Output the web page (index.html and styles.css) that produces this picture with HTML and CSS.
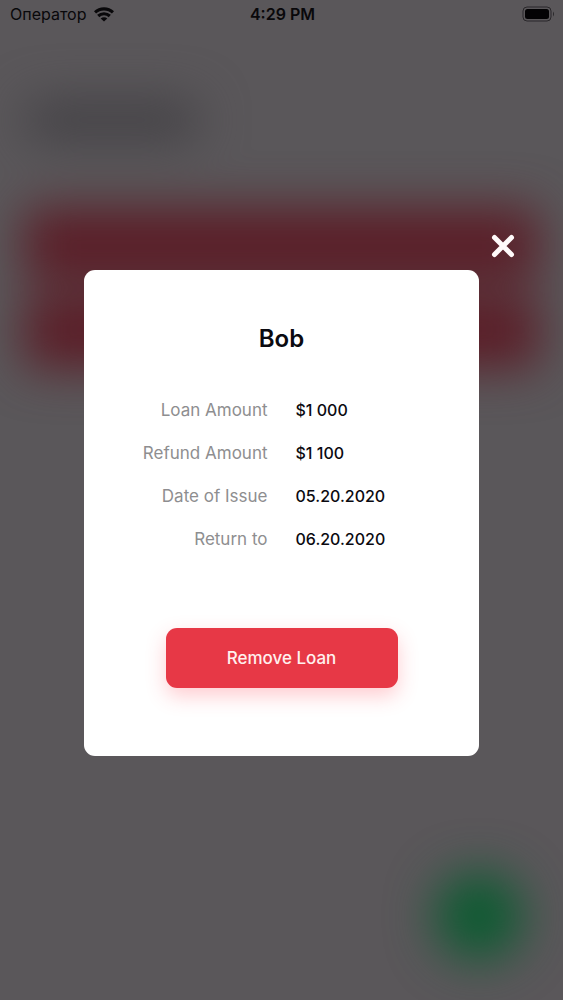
FILE: index.html
```html
<!DOCTYPE html>
<html lang="en">
<head>
<meta charset="utf-8">
<meta name="viewport" content="width=device-width, initial-scale=1">
<title>Loan details</title>
<link rel="stylesheet" href="styles.css">
</head>
<body>
<div class="screen">
  <div class="backdrop" aria-hidden="true">
    <div class="backdrop-title"></div>
    <div class="backdrop-list">
      <div class="backdrop-row"></div>
      <div class="backdrop-row"></div>
    </div>
    <div class="backdrop-add"></div>
  </div>
  <div class="overlay">
    <header class="status">
      <div class="carrier">
        <span>Оператор</span>
        <svg class="wifi" viewBox="0 0 20 15" aria-hidden="true">
          <g fill="none" stroke="#09080a" stroke-width="3.2">
            <path d="M1 5.4C6 .7 14 .7 19 5.4"/>
            <path d="M4.2 9C7.5 6 12.5 6 15.8 9"/>
          </g>
          <path fill="#09080a" d="M10 14.6 6.7 11.4C8.5 9.8 11.5 9.8 13.3 11.4Z"/>
        </svg>
      </div>
      <time class="clock">4:29 PM</time>
      <svg class="battery" viewBox="0 0 33 16" aria-hidden="true">
        <rect x="1" y="1" width="28" height="14" rx="4" fill="none" stroke="#29272a" stroke-width="1"/>
        <rect x="3" y="3" width="24" height="10" rx="2.5" fill="#030204"/>
        <path d="M31 5.500q2 2.500 0 5z" fill="#29272a"/>
      </svg>
    </header>
    <main class="stage">
      <button class="close" type="button" aria-label="Close">
        <svg viewBox="0 0 24 24" aria-hidden="true"><path d="M3.500 3.500 20.500 20.500M20.500 3.500 3.500 20.500" stroke="#fffafa" stroke-width="5" stroke-linecap="round"/></svg>
      </button>
      <section class="card" role="dialog" aria-labelledby="name">
        <h1 class="name" id="name">Bob</h1>
        <dl class="details">
          <dt>Loan Amount</dt><dd>$1 000</dd>
          <dt>Refund Amount</dt><dd>$1 100</dd>
          <dt>Date of Issue</dt><dd>05.20.2020</dd>
          <dt>Return to</dt><dd>06.20.2020</dd>
        </dl>
        <button class="remove" type="button">Remove Loan</button>
      </section>
    </main>
  </div>
</div>
</body>
</html>
```
FILE: styles.css
```css
* { box-sizing: border-box; }

body {
  margin: 0;
  background: #5a575a;
  font-family: Inter, "Liberation Sans", sans-serif;
  color: #0b0a10;
}

.screen {
  display: grid;
  min-height: 100vh;
  overflow: hidden;
}

.backdrop,
.overlay {
  grid-area: 1 / 1;
  display: flex;
  flex-direction: column;
}

.backdrop {
  padding: 100px 24px 40px;
  filter: blur(24px);
}

.backdrop-title {
  width: 176px;
  height: 40px;
  border-radius: 20px;
  background: #434145;
}

.backdrop-list {
  display: flex;
  flex-direction: column;
  gap: 16px;
  margin-top: 68px;
}

.backdrop-row {
  height: 72px;
  border-radius: 12px;
  background: #5b1d27;
}

.backdrop-add {
  width: 88px;
  height: 88px;
  margin: auto 16px 0 auto;
  border-radius: 50%;
  background: #0c5b31;
}

.overlay { z-index: 1; }

.status {
  display: grid;
  grid-template-columns: 1fr auto 1fr;
  align-items: center;
  height: 28px;
  padding: 0 8px 0 10px;
  font-size: 16px;
  color: #09080a;
}

.carrier {
  display: flex;
  align-items: center;
  gap: 8px;
}

.wifi { width: 20px; height: 15px; }

.clock { font-weight: 600; }

.battery {
  width: 33px;
  height: 16px;
  justify-self: end;
}

.stage {
  flex: 1;
  display: grid;
  grid-template-rows: 1fr auto 1fr;
  padding-bottom: 2px;
}

.close {
  align-self: end;
  justify-self: end;
  width: 24px;
  height: 24px;
  margin: 0 48px 12px;
  padding: 0;
  border: 0;
  background: none;
  cursor: pointer;
}

.close svg { display: block; }

.card {
  display: flex;
  flex-direction: column;
  align-items: center;
  width: 70%;
  justify-self: center;
  padding: 53px 24px 68px;
  border-radius: 11px;
  background: #fff;
}

.name {
  margin: 0;
  font-size: 24px;
  line-height: 32px;
  font-weight: 600;
}

.details {
  display: grid;
  grid-template-columns: 1fr 1fr;
  align-items: baseline;
  gap: 19px 28px;
  width: 100%;
  margin: 43px 0 77px;
  font-size: 16px;
  line-height: 24px;
}

.details dt { font-size: 17px; text-align: right; color: #8e8e90; }

.details dd { margin: 0; font-weight: 500; }

.remove {
  width: 232px;
  height: 60px;
  border: 0;
  border-radius: 11px;
  background: #e73846;
  box-shadow: 0 8px 20px #ff384640;
  color: #fff0ee;
  font: 500 17px/24px Inter, "Liberation Sans", sans-serif;
  cursor: pointer;
}
```
